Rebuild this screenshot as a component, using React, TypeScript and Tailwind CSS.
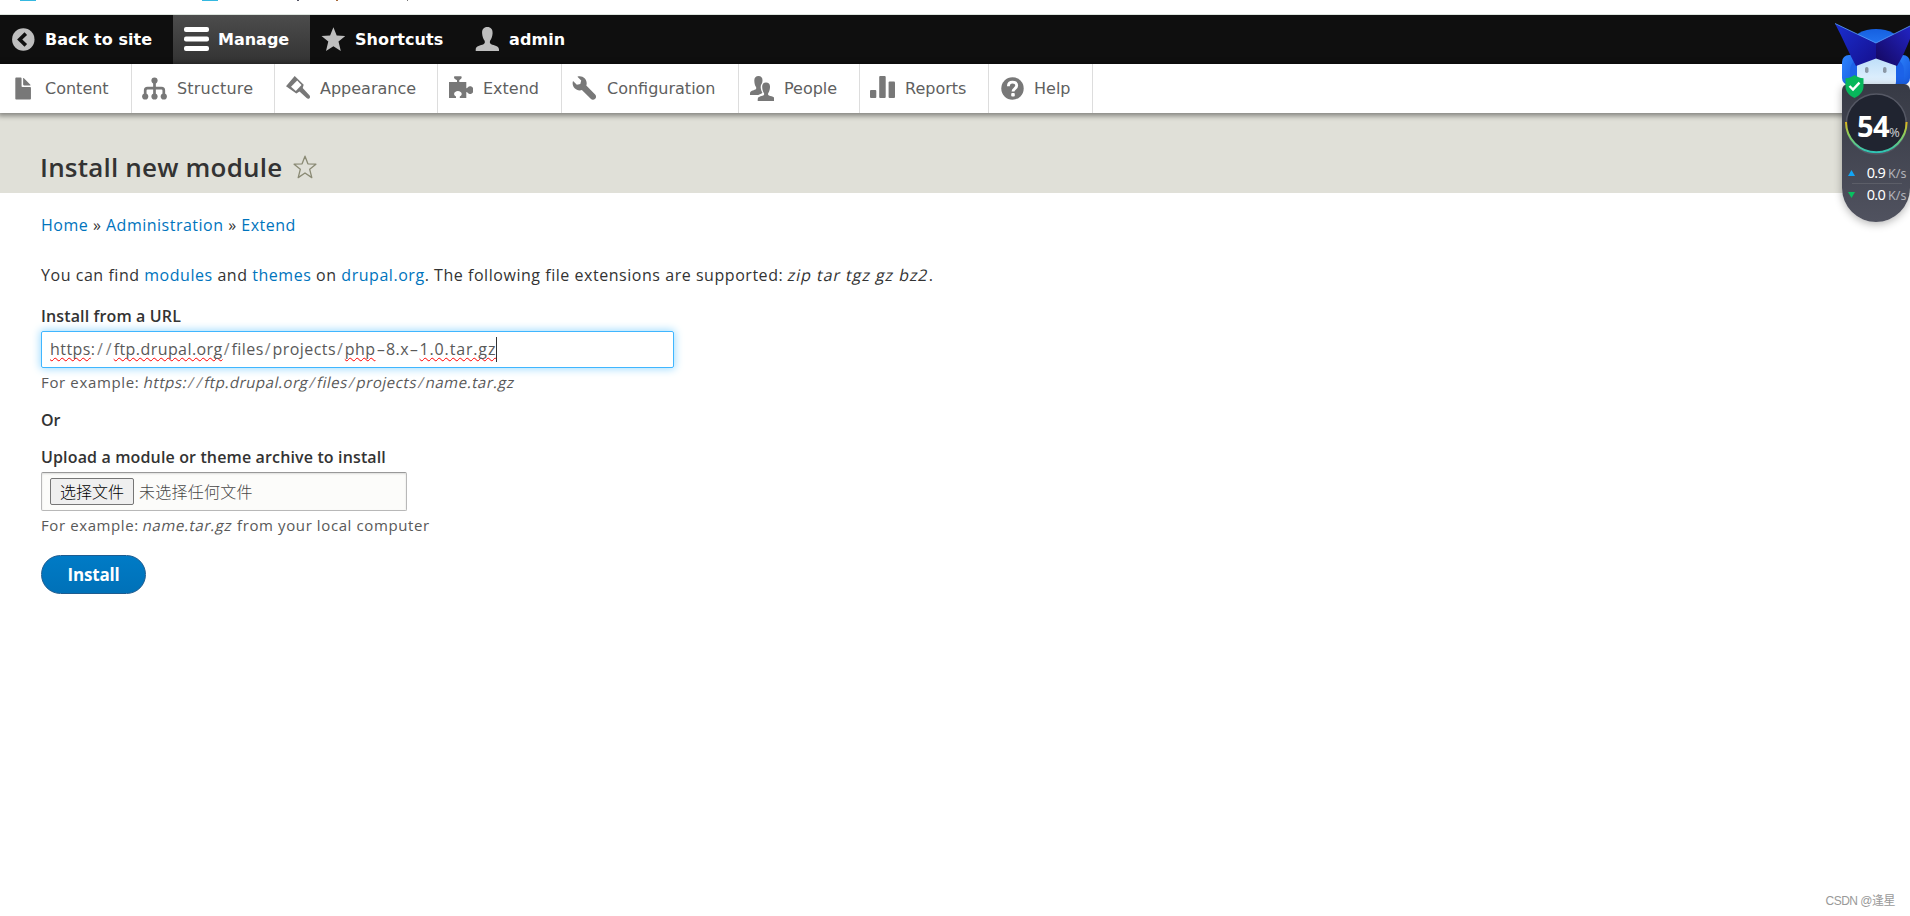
import type { ReactNode } from 'react';

interface ItemProps {
  label: string;
  width: string;
  icon: ReactNode;
  active?: boolean;
}

function Icon({ children, viewBox = '0 0 25 25' }: { children: ReactNode; viewBox?: string }) {
  return (
    <svg className="w-[25px] h-[25px] shrink-0 fill-current" viewBox={viewBox}>
      {children}
    </svg>
  );
}

const barItems: ItemProps[] = [
  {
    label: 'Back to site',
    width: 'w-[173px] tracking-[0.06px]',
    icon: (
      <Icon>
        <circle cx="13.3" cy="12.5" r="11.2" />
        <path d="M15.8 6.6L9.7 12.5l6.1 5.9" fill="none" stroke="#0f0f0f" strokeWidth="3.6" />
      </Icon>
    ),
  },
  {
    label: 'Manage',
    width: 'w-[137px]',
    active: true,
    icon: (
      <Icon>
        <rect x="0" y="0" width="25" height="5" rx="2" />
        <rect x="0" y="9.6" width="25" height="4.8" rx="2" />
        <rect x="0" y="19" width="25" height="5" rx="2" />
      </Icon>
    ),
  },
  {
    label: 'Shortcuts',
    width: 'w-[154px] tracking-[0.1px]',
    icon: (
      <Icon>
        <path d="M13.4.2l3.3 8.4 8.6.3-6.800 5.600 2.300 9.500-7.400-4.800-7.400 4.800 2.300-9.500L1.500 8.900l8.600-.3z" />
      </Icon>
    ),
  },
  {
    label: 'admin',
    width: 'w-[120px] tracking-[0.1px]',
    icon: (
      <Icon>
        <path d="M13.3 0c3.600 0 5.500 2.300 5.300 6.200-.2 3.300-1.200 5.600-2.400 7.400-.7 1.600-.4 3 1 3.700 2.800 1.300 7.800 1.500 7.800 5.200V24H1.700v-1.500c0-3.700 5-3.900 7.800-5.200 1.400-.7 1.700-2.100 1-3.700-1.200-1.800-2.200-4.100-2.400-7.400C7.900 2.300 9.700 0 13.300 0z" />
      </Icon>
    ),
  },
];

const trayItems: ItemProps[] = [
  {
    label: 'Content',
    width: 'w-[132px]',
    icon: (
      <Icon viewBox="-.4 0 16 16">
        <path d="M12.502 7h-5c-.276 0-.502-.225-.502-.5v-5c0-.275-.225-.5-.5-.5h-3c-.275 0-.5.225-.5.5v13.029c0 .275.225.5.5.5h9.002c.275 0 .5-.225.5-.5V7.500c0-.275-.225-.5-.5-.5zM8.502 6h4c.275 0 .34-.159.146-.354l-4.293-4.292c-.195-.195-.353-.129-.353.146v4c0 .275.225.5.5.5z" />
      </Icon>
    ),
  },
  {
    label: 'Structure',
    width: 'w-[143px] tracking-[0.2px]',
    icon: (
      <Icon>
        <circle cx="12.500" cy="4.600" r="3.100" />
        <circle cx="3.200" cy="20.500" r="3.100" />
        <circle cx="12.500" cy="20.500" r="3.100" />
        <circle cx="21.800" cy="20.500" r="3.100" />
        <path
          d="M12.500 5v15M3.200 20v-5.500q0-2.300 2.300-2.300h14q2.300 0 2.300 2.300V20"
          fill="none"
          stroke="currentColor"
          strokeWidth="2.700"
        />
      </Icon>
    ),
  },
  {
    label: 'Appearance',
    width: 'w-[163px]',
    icon: (
      <Icon>
        <path d="M9.700 0l9 8.800-1 3.200 6.700 7.300c.9 1.100.8 2.200.1 2.900-.8.800-1.900.8-2.900-.1L14.500 15.500l-3.200 2L1 10.200z" />
        <path d="M12.200 4.600l4.300 4.500-5.700 5.800-4.800-4.200z" fill="#fff" />
      </Icon>
    ),
  },
  {
    label: 'Extend',
    width: 'w-[124px]',
    icon: (
      <Icon>
        <path d="M1 6h8V4.200C7.500 3.500 6 2.600 6 1.300 6 .5 6.500.2 7 .2h5.700c.6 0 1 .4 1 1.100 0 1.300-1.400 2.200-2.400 2.900V6h7v6.300c1.300-.1 1.800-2 3.700-2 2 0 3.500 1.500 3.500 3.800s-1.500 3.900-3.500 3.900c-1.900 0-2.400-2-3.700-2.100V22h-6.500v-1.500c1-.5 1.900-1.300 1.900-2.500 0-1.800-1.700-3.100-3.800-3.100s-3.800 1.300-3.800 3.100c0 1.200.9 2 1.900 2.500V22H1z" />
      </Icon>
    ),
  },
  {
    label: 'Configuration',
    width: 'w-[177px]',
    icon: (
      <Icon viewBox="-.4 -.2 16 16">
        <path d="M14.416 11.586l-.01-.008v-.001l-5.656-5.656c.15-.449.252-.921.252-1.421 0-2.485-2.016-4.500-4.502-4.500-.505 0-.981.102-1.434.255l2.431 2.431-.588 2.196-2.196.588-2.445-2.445c-.162.464-.268.956-.268 1.475 0 2.486 2.014 4.500 4.500 4.500.5 0 .972-.102 1.421-.251l5.667 5.665c.781.781 2.047.781 2.828 0s.781-2.047 0-2.828z" />
      </Icon>
    ),
  },
  {
    label: 'People',
    width: 'w-[121px]',
    icon: (
      <Icon>
        <path d="M9.500 0c2.600 0 4.100 1.700 4 4.500-.1 1-.2 1.900-.5 2.700-1.300 1.400-1.500 3.600-1.100 5.800.3 1.500.8 2.600 1.500 3.700-.8 1.300-2.900 1.400-4.200 2.300H1v-1.400c0-3 3.500-3 5.300-4 1-.6 1.200-1.500.7-2.700C5.900 9.500 5.400 7.500 5.300 4.500 5.300 1.700 6.900 0 9.500 0z" />
        <path d="M17 6.600c2.700 0 4.200 1.700 4 4.600-.1 2.500-.8 4.500-1.700 5.900-.5 1.200-.3 2 .7 2.500 2 .9 5.700.8 5.700 3.900V25H8.700v-1.500c0-3.100 3.500-3 5.500-3.900 1-.5 1.200-1.300.7-2.500-.9-1.400-1.600-3.400-1.700-5.900-.2-2.900 1.200-4.600 3.800-4.600z" />
      </Icon>
    ),
  },
  {
    label: 'Reports',
    width: 'w-[129px]',
    icon: (
      <Icon>
        <rect x="0" y="14" width="6.300" height="8" rx="1" />
        <rect x="9.200" y="0" width="6.500" height="22" rx="1" />
        <rect x="18.600" y="5.500" width="6.400" height="16.500" rx="1" />
      </Icon>
    ),
  },
  {
    label: 'Help',
    width: 'w-[104px]',
    icon: (
      <Icon>
        <circle cx="13.500" cy="12.500" r="11.200" />
        <path d="M9.400 10.200c0-2.700 1.500-4.100 4-4.100s4.300 1.400 4.300 3.500c0 3-3.700 2.900-3.700 5.900" fill="none" stroke="#fff" strokeWidth="2.900" />
        <rect x="12.200" y="16.900" width="3.600" height="3.500" rx="1" fill="#fff" />
      </Icon>
    ),
  },
];

function BarItem({ label, width, icon, active = false }: ItemProps) {
  return (
    <a
      className={`flex items-center h-full font-bold text-white whitespace-nowrap ${width} ${
        active ? 'pl-[11px] gap-[9px] bg-linear-to-b from-[#4c4c4c] to-[#333]' : 'pl-[10px] gap-[10px]'
      }`}
    >
      <span className={active ? 'text-white' : 'text-[#bebebe]'}>{icon}</span>
      {label}
    </a>
  );
}

function TrayItem({ label, width, icon }: ItemProps) {
  return (
    <a className={`flex items-center h-full pl-[10px] gap-[10px] border-r border-[#ddd] text-[#606060] whitespace-nowrap ${width}`}>
      <span className="text-[#787878]">{icon}</span>
      {label}
    </a>
  );
}

function Link({ children }: { children: ReactNode }) {
  return <a className="text-[#0074bd]">{children}</a>;
}

// Slanted upright letters, the body face has no italic of its own
function Em({ children }: { children: ReactNode }) {
  return <em className="not-italic inline-block -skew-x-12">{children}</em>;
}

function Misspelt({ children }: { children: ReactNode }) {
  return (
    <span className="underline decoration-wavy decoration-[#f00] decoration-1 underline-offset-[2px] [text-decoration-skip-ink:none]">
      {children}
    </span>
  );
}

function Slash() {
  return <span className="pl-[1px] tracking-[1.950px] opacity-80">/</span>;
}

function Hyphen() {
  return <span className="inline-block w-[10.500px] text-center scale-x-[1.700]">-</span>;
}

function Mascot() {
  return (
    <svg className="w-[76px] h-[76px] absolute left-0 top-0" viewBox="0 0 76 76">
      <defs>
        <linearGradient id="hat" x1="0" y1="0" x2="1" y2="1">
          <stop offset="0" stopColor="#1a2fd0" />
          <stop offset="1" stopColor="#150f8e" />
        </linearGradient>
        <linearGradient id="hatRight" x1="1" y1="0" x2="0" y2="1">
          <stop offset="0" stopColor="#2224c4" />
          <stop offset="1" stopColor="#14065c" />
        </linearGradient>
        <linearGradient id="helmet" x1="0" y1="0" x2="0" y2="1">
          <stop offset="0" stopColor="#1660e0" />
          <stop offset="1" stopColor="#2f86ff" />
        </linearGradient>
        <linearGradient id="ear" x1="0" y1="0" x2="1" y2="1">
          <stop offset="0" stopColor="#2f86ff" />
          <stop offset="1" stopColor="#1556dc" />
        </linearGradient>
        <linearGradient id="face" x1="0" y1="0" x2="0" y2="1">
          <stop offset="0" stopColor="#b9dcf8" />
          <stop offset="1" stopColor="#f0f8ff" />
        </linearGradient>
      </defs>
      <ellipse cx="42" cy="28" rx="24" ry="14" fill="url(#helmet)" />
      <rect x="8" y="40" width="16" height="30" rx="7" fill="url(#ear)" />
      <rect x="62" y="40" width="14" height="30" rx="7" fill="url(#ear)" />
      <rect x="16" y="42" width="54" height="34" rx="14" fill="#1c62e8" />
      <rect x="23" y="40" width="39" height="36" rx="9" fill="url(#face)" />
      <rect x="31" y="52" width="3.500" height="6" rx="1.700" fill="#8b98a5" />
      <rect x="49" y="52" width="3.500" height="6" rx="1.700" fill="#8b98a5" />
      <path d="M1 8.500l41 19.500v15.500l-20 7.500C14 36 9 24 1 8.500z" fill="url(#hat)" />
      <path d="M76 11L42 28v15.500l21 7.500c5-8 9-17 13-27z" fill="url(#hatRight)" />
      <path d="M1 8.500l41 19.500 34-17" fill="none" stroke="#5aa5ff" strokeWidth=".8" />
    </svg>
  );
}

function SpeedRow({ value, up = false }: { value: string; up?: boolean }) {
  return (
    <div className="flex items-center h-[21px] pl-[6px] text-white">
      <svg className="w-[7px] h-[6px] shrink-0" viewBox="0 0 7 6">
        <path d={up ? 'M3.500 0L7 6H0z' : 'M0 0h7L3.500 6z'} fill={up ? '#12a5f5' : '#07c160'} />
      </svg>
      <span className="w-[30px] text-right text-[14.500px] tracking-[-0.7px]">{value}</span>
      <span className="pl-[3px] pt-[3px] text-[12.500px] text-[#b2b4ba]">K/s</span>
    </div>
  );
}

// Desktop speed monitor floating over the page
function SpeedWidget() {
  return (
    <div className="absolute left-[1834px] top-[15px] w-[76px] h-[215px] font-['Noto_Sans',sans-serif]">
      <Mascot />
      <div className="absolute left-[8px] top-[69px] w-[68px] h-[138px] rounded-t-[6px] rounded-b-[34px] bg-linear-to-b from-[#373a45] to-[#50525f] shadow-[0_2px_8px_rgba(0,0,0,0.3)]">
        <svg className="block w-[68px] h-[74px]" viewBox="0 0 68 74">
          <defs>
            <linearGradient id="ring" x1="0" y1="0" x2="0" y2="1">
              <stop offset="0" stopColor="#e0b41c" />
              <stop offset=".4" stopColor="#8ecf5a" />
              <stop offset="1" stopColor="#2fc3b6" />
            </linearGradient>
          </defs>
          <circle cx="34.300" cy="40" r="30" fill="#202430" stroke="#555864" strokeWidth="1.600" />
          <path d="M4 38a30.300 30.300 0 0 0 60.600 0" fill="none" stroke="url(#ring)" strokeWidth="2" />
        </svg>
        <div className="absolute left-[15px] top-[22px] flex items-baseline text-white leading-[40px]">
          <span className="text-[29px] font-bold tracking-[-0.6px]">54</span>
          <span className="text-[13px] leading-none text-[#c4c6cc]">%</span>
        </div>
        <div className="pt-[4px]">
          <SpeedRow value="0.9" up />
          <div className="h-px ml-[10px] mr-[8px] bg-[#5c5e68]" />
          <SpeedRow value="0.0" />
        </div>
      </div>
      <svg className="absolute left-[11px] top-[60px] w-[19px] h-[23px]" viewBox="0 0 19 23">
        <path d="M9.500 0c2.500 2 5.500 3 9 3.200V11c0 6-4 9.500-9 12-5-2.500-9-6-9-12V3.200C4 3 7 2 9.500 0z" fill="#07b75b" />
        <path d="M4.500 11l3.500 3.600 6.500-7" fill="none" stroke="#fff" strokeWidth="2.400" />
      </svg>
    </div>
  );
}

export default function App() {
  return (
    <div className="relative w-[1910px] h-[916px] overflow-hidden bg-white font-['Open_Sans','Noto_Sans_CJK_SC',sans-serif] text-[16px] text-[#333]">
      {/* Lower edge of the browser's bookmark bar */}
      <div className="flex items-start h-[15px] border-b border-[#dde4de]">
        <div className="ml-[20px] w-[16px] h-px bg-[#35b8e0]" />
        <div className="ml-[166px] w-[16px] h-px bg-[#35b8e0]" />
        <div className="ml-[79px] w-[2px] h-px bg-[#556]" />
        <div className="ml-[37px] w-[2px] h-px bg-[#a86a3a]" />
        <div className="ml-[69px] w-px h-px bg-[#777]" />
      </div>

      <nav className="flex h-[49px] bg-[#0f0f0f] font-['DejaVu_Sans',sans-serif]">
        {barItems.map(item => (
          <BarItem key={item.label} {...item} />
        ))}
      </nav>
      <nav className="relative flex h-[49px] bg-white font-['DejaVu_Sans',sans-serif] shadow-[0_1px_5px_2px_rgba(0,0,0,0.4)]">
        {trayItems.map(item => (
          <TrayItem key={item.label} {...item} />
        ))}
      </nav>

      <header className="flex h-[80px] pl-[40px] pt-[34px] bg-[#e0e0d8]">
        <h1 className="text-[26px] leading-[40px] font-semibold tracking-[0.2px]">Install new module</h1>
        <svg className="ml-[11px] mt-[8px] w-[24px] h-[24px]" viewBox="0 0 24 24">
          <path
            d="M12 1.200l2.900 7.600 8 .4-6.200 5.100 2.100 8.300-6.800-4.600-6.800 4.600 2.100-8.300L1.100 9.200l8-.4z"
            fill="none"
            stroke="#8a8a74"
            strokeWidth="1.300"
            strokeLinejoin="round"
          />
        </svg>
      </header>

      <main className="flex flex-col items-start pl-[41px] pt-[20px] whitespace-nowrap leading-[24px]">
        <p className="tracking-[0.5px]">
          <Link>Home</Link> » <Link>Administration</Link> » <Link>Extend</Link>
        </p>
        <p className="mt-[26px] tracking-[0.54px]">
          You can find <Link>modules</Link> and <Link>themes</Link> on <Link>drupal.org</Link>. The following file extensions are
          supported:{' '}
          <span className="tracking-[0.95px]">
            <Em>zip tar tgz gz bz2</Em>
          </span>
          .
        </p>

        <label className="mt-[17px] font-semibold tracking-[0.13px]">Install from a URL</label>
        <div className="flex items-center mt-[3px] w-[633px] h-[37px] pl-[8px] border border-[#40b6ff] rounded-[2px] text-[#595959] shadow-[0_0_8px_1px_#9fdcff]">
          <span className="pb-[1px] tracking-[0.43px]">
            <Misspelt>https</Misspelt>
            <span className="tracking-[1px]">:</span>
            <Slash />
            <Slash />
            <Misspelt>ftp.drupal.org</Misspelt>
            <Slash />
            files
            <Slash />
            projects
            <Slash />
            <Misspelt>php</Misspelt>
            <Hyphen />
            8.x
            <Hyphen />
            <span className="tracking-[0.85px]">
              <Misspelt>1.0.tar.gz</Misspelt>
            </span>
          </span>
          <span className="w-px h-[25px] bg-[#333]" />
        </div>
        <p className="mt-[3px] text-[15px] leading-[22px] tracking-[0.64px] text-[#595959]">
          For example:{' '}
          <span className="tracking-[0.56px]">
            <Em>
              https:
              <Slash />
              <Slash />
              ftp.drupal.org
              <Slash />
              files
              <Slash />
              projects
              <Slash />
              name.tar.gz
            </Em>
          </span>
        </p>

        <p className="mt-[15px] font-semibold">Or</p>

        <label className="mt-[13px] font-semibold tracking-[0.14px]">Upload a module or theme archive to install</label>
        <div className="flex items-center mt-[3px] w-[366px] h-[39px] pl-[8px] border border-[#b8b8b8] border-t-[#999] rounded-[2px] bg-[#fcfcfa] shadow-[inset_0_1px_2px_rgba(0,0,0,0.125)]">
          <button className="h-[27px] w-[84px] border border-[#767676] rounded-[2px] bg-[#efefef] font-light text-[16px] leading-[26px] text-black">
            选择文件
          </button>
          <span className="ml-[5px] font-light tracking-[0.25px] text-[#484848]">未选择任何文件</span>
        </div>
        <p className="mt-[3px] text-[15px] leading-[22px] tracking-[0.6px] text-[#595959]">
          For example: <Em>name.tar.gz</Em> from your local computer
        </p>

        <button className="mt-[19px] w-[105px] h-[39px] rounded-full border border-[#1e5c90] bg-linear-to-b from-[#007bc6] to-[#0071b8] font-bold text-[17px] leading-[36px] tracking-[-0.2px] text-white">
          Install
        </button>
      </main>

      <SpeedWidget />
      <div className="absolute right-[15px] bottom-[6px] text-[12px] leading-[18px] tracking-[-0.5px] text-[#999] font-['Liberation_Sans','Noto_Sans_CJK_SC',sans-serif]">
        CSDN @逢星
      </div>
    </div>
  );
}
